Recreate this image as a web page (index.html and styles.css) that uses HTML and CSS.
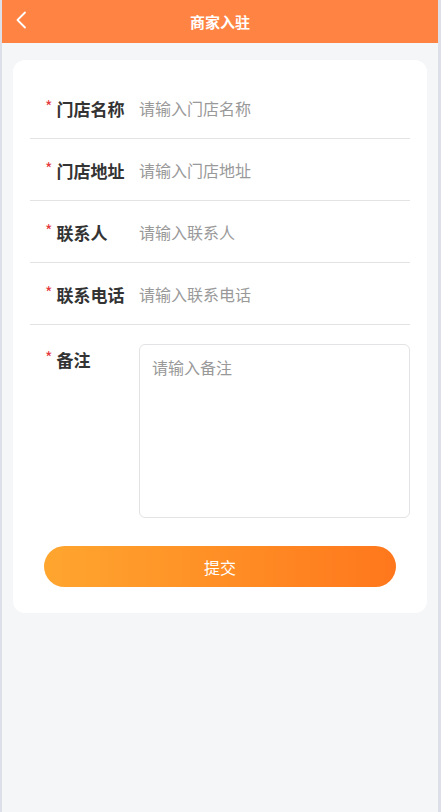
FILE: index.html
```html
<!DOCTYPE html>
<html lang="zh-CN">
<head>
  <meta charset="UTF-8">
  <title>商家入驻</title>
  <link rel="stylesheet" href="styles.css">
</head>
<body>

<div class="app">
  <div class="header">
    <span class="back">
      <svg width="12" height="18" viewBox="0 0 12 18"><path d="M10 1.5 L2.5 9 L10 16.5" fill="none" stroke="#fff" stroke-width="1.8" stroke-linecap="round" stroke-linejoin="round"/></svg>
    </span>
    <div class="title">商家入驻</div>
  </div>

  <div class="card">
    <div class="row">
      <label class="label"><i>*</i>门店名称</label>
      <input class="input" type="text" placeholder="请输入门店名称">
    </div>
    <div class="row">
      <label class="label"><i>*</i>门店地址</label>
      <input class="input" type="text" placeholder="请输入门店地址">
    </div>
    <div class="row">
      <label class="label"><i>*</i>联系人</label>
      <input class="input" type="text" placeholder="请输入联系人">
    </div>
    <div class="row">
      <label class="label"><i>*</i>联系电话</label>
      <input class="input" type="text" placeholder="请输入联系电话">
    </div>
    <div class="row row-area">
      <label class="label"><i>*</i>备注</label>
      <textarea class="area" placeholder="请输入备注"></textarea>
    </div>
    <button class="submit">提交</button>
  </div>
</div>

</body>
</html>
```

FILE: styles.css
```css
* {
  box-sizing: border-box;
}

body {
  margin: 0;
  background-color: #dde0e8;
  font-family: "Noto Sans CJK SC", "Noto Sans", sans-serif;
}

.app {
  margin: 0 3px 0 2px;
  min-height: 812px;
  background-color: #f5f6f8;
  padding-bottom: 1px;
}

.header {
  position: relative;
  height: 43px;
  background-color: #ff8444;
  display: flex;
  align-items: center;
  justify-content: center;
}

.back {
  position: absolute;
  left: 13px;
  top: 11px;
  display: flex;
}

.title {
  color: #fff;
  font-size: 15px;
  font-weight: bold;
}

.card {
  margin: 17px 11px 0 11px;
  background-color: #fff;
  border-radius: 12px;
  padding: 17px 17px 26px 17px;
}

.row {
  display: flex;
  align-items: center;
  height: 62px;
  border-bottom: 1px solid #e3e3e3;
}

.label {
  width: 109px;
  padding-left: 15px;
  font-size: 17px;
  font-weight: bold;
  color: #333;
  flex-shrink: 0;
}

.label i {
  font-style: normal;
  font-weight: normal;
  color: #e4393c;
  font-size: 16px;
  margin-right: 4px;
  vertical-align: 3px;
}

.input {
  flex: 1;
  border: none;
  outline: none;
  font-family: inherit;
  font-size: 16px;
  color: #333;
  padding: 0;
  background: transparent;
}

.input::placeholder,
.area::placeholder {
  color: #999;
}

.row-area {
  height: auto;
  align-items: flex-start;
  border-bottom: none;
  padding-top: 19px;
}

.row-area .label {
  padding-top: 1px;
}

.area {
  flex: 1;
  height: 174px;
  border: 1px solid #e3e3e6;
  border-radius: 6px;
  padding: 10px 12px;
  font-family: inherit;
  font-size: 16px;
  resize: none;
  outline: none;
}

.submit {
  display: block;
  width: calc(100% - 28px);
  margin: 28px 14px 0 14px;
  height: 41px;
  border: none;
  border-radius: 21px;
  background: linear-gradient(90deg, #ffa62f, #ff771c);
  color: #fff;
  font-family: inherit;
  font-size: 16px;
  cursor: pointer;
}
```
